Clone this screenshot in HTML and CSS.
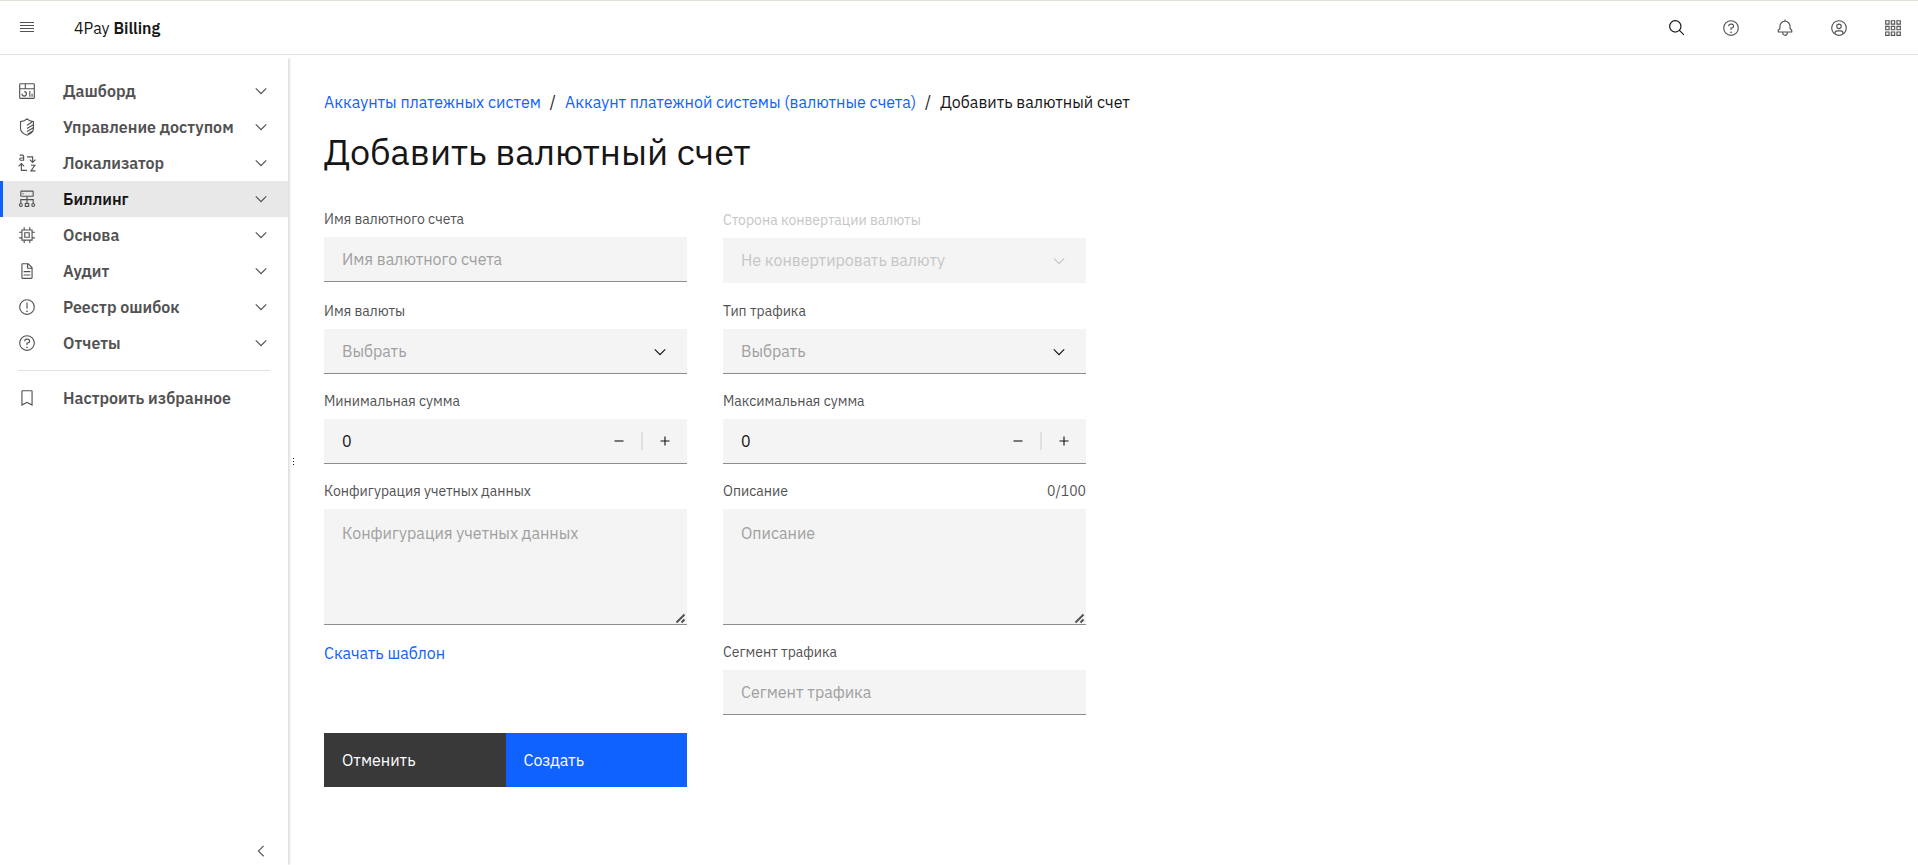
FILE: index.html
```html
<!DOCTYPE html>
<html lang="ru">
<head>
    <meta charset="UTF-8">
    <meta name="viewport" content="width=device-width, initial-scale=1.0">
    <title>4Pay Billing</title>
    <link rel="stylesheet" href="styles.css">
</head>
<body>
    <header class="header">
        <button type="button" class="menu-btn" aria-label="Меню">
            <svg class="icon" viewBox="0 0 18 18"><path d="M2 4h14v1H2zM2 7h14v1H2zM2 10h14v1H2zM2 13h14v1H2z" /></svg>
        </button>
        <a href="#" class="brand">4Pay <b>Billing</b></a>
        <div class="header-actions">
            <button type="button" class="header-btn search" aria-label="Поиск">
                <svg class="icon" viewBox="0 0 32 32"><path d="M29,27.5859l-7.5521-7.5521a11.0177,11.0177,0,1,0-1.4141,1.4141L27.5859,29ZM4,13a9,9,0,1,1,9,9A9.01,9.01,0,0,1,4,13Z" /></svg>
            </button>
            <button type="button" class="header-btn" aria-label="Помощь">
                <svg class="icon" viewBox="0 0 32 32"><circle class="line" cx="16" cy="16" r="13" /><path d="M17,8H15.5A4.49,4.49,0,0,0,11,12.5V13h2v-.5A2.5,2.5,0,0,1,15.5,10H17a2.5,2.5,0,0,1,0,5H15v4.5h2V17a4.5,4.5,0,0,0,0-9Z" /><circle cx="16" cy="23.5" r="1.5" /></svg>
            </button>
            <button type="button" class="header-btn" aria-label="Уведомления">
                <svg class="icon" viewBox="0 0 32 32"><path d="M28.7071,19.293,26,16.5859V13a10.0136,10.0136,0,0,0-9-9.9492V1H15V3.0508A10.0136,10.0136,0,0,0,6,13v3.5859L3.2929,19.293A1,1,0,0,0,3,20v3a1,1,0,0,0,1,1h7v.7768a5.152,5.152,0,0,0,4.5,5.1987A5.0057,5.0057,0,0,0,21,25V24h7a1,1,0,0,0,1-1V20A1,1,0,0,0,28.7071,19.293ZM19,25a3,3,0,0,1-6,0V24h6Zm8-3H5V20.4141L7.707,17.707A1,1,0,0,0,8,17V13a8,8,0,0,1,16,0v4a1,1,0,0,0,.293.707L27,20.4141Z" /></svg>
            </button>
            <button type="button" class="header-btn" aria-label="Профиль">
                <svg class="icon" viewBox="0 0 32 32"><path d="M16,8a5,5,0,1,0,5,5A5,5,0,0,0,16,8Zm0,8a3,3,0,1,1,3-3A3.0034,3.0034,0,0,1,16,16Z" /><path d="M16,2A14,14,0,1,0,30,16,14.0158,14.0158,0,0,0,16,2ZM10,26.3765V25a3.0033,3.0033,0,0,1,3-3h6a3.0033,3.0033,0,0,1,3,3v1.3765a11.8989,11.8989,0,0,1-12,0Zm13.9925-1.4507A5.0016,5.0016,0,0,0,19,20H13a5.0016,5.0016,0,0,0-4.9925,4.9258,12,12,0,1,1,15.985,0Z" /></svg>
            </button>
            <button type="button" class="header-btn" aria-label="Приложения">
                <svg class="icon" viewBox="0 0 32 32"><path class="line" d="M3 3h6v6H3zM13 3h6v6h-6zM23 3h6v6h-6zM3 13h6v6H3zM13 13h6v6h-6zM23 13h6v6h-6zM3 23h6v6H3zM13 23h6v6h-6zM23 23h6v6h-6z" /></svg>
            </button>
        </div>
    </header>

    <div class="layout">
        <aside class="sidebar">
            <nav class="nav">
                <button type="button" class="nav-item">
                    <svg class="icon" viewBox="0 0 32 32"><path d="M24 21h2v5h-2zM20 16h2v10h-2z" /><path d="M11,26a5.0059,5.0059,0,0,1-5-5H8a3,3,0,1,0,3-3V16a5,5,0,0,1,0,10Z" /><path d="M28,2H4A2.002,2.002,0,0,0,2,4V28a2.0023,2.0023,0,0,0,2,2H28a2.0027,2.0027,0,0,0,2-2V4A2.0023,2.0023,0,0,0,28,2Zm0,9H14V4H28ZM12,4v7H4V4ZM4,28V13H28.0007l.0013,15Z" /></svg>
                    <span>Дашборд</span>
                    <svg class="icon" viewBox="0 0 32 32"><path d="M16 22 6 12l1.4-1.4 8.6 8.6 8.6-8.6L26 12z" /></svg>
                </button>
                <button type="button" class="nav-item">
                    <svg class="icon" viewBox="0 0 32 32"><path class="line" d="M16 1.5C13 4.500 9 6 4.500 6.500V18c0 6 5 10 11.500 12.500C22.500 28 27.500 24 27.500 18V6.500C23 6 19 4.500 16 1.500zM16 13l9-6M16 18.500l11-6.500M16 24l11-6.500M17 29l9-6" /></svg>
                    <span>Управление доступом</span>
                    <svg class="icon" viewBox="0 0 32 32"><path d="M16 22 6 12l1.4-1.4 8.6 8.6 8.6-8.6L26 12z" /></svg>
                </button>
                <button type="button" class="nav-item">
                    <svg class="icon" viewBox="0 0 32 32"><path class="line" d="M16 5h10v9M21 10l5 5 5-5M16 29H6V18M1 22l5-5 5 5" /><path class="line" d="M3 2h5q2 0 2 2v7H5q-2 0-2-2t2-2h5M23 20h7l-7 10h8" /></svg>
                    <span>Локализатор</span>
                    <svg class="icon" viewBox="0 0 32 32"><path d="M16 22 6 12l1.4-1.4 8.6 8.6 8.6-8.6L26 12z" /></svg>
                </button>
                <button type="button" class="nav-item active">
                    <svg class="icon" viewBox="0 0 32 32"><rect class="line" x="5" y="2" width="22" height="9" rx="1" /><circle cx="9" cy="6.5" r="1" /><path class="line" d="M16 11v12M5 24v-7h22v7M13 24h6v5h-6z" /><circle class="line" cx="5" cy="26.5" r="2.5" /><circle class="line" cx="27" cy="26.5" r="2.5" /></svg>
                    <span>Биллинг</span>
                    <svg class="icon" viewBox="0 0 32 32"><path d="M16 22 6 12l1.4-1.4 8.6 8.6 8.6-8.6L26 12z" /></svg>
                </button>
                <button type="button" class="nav-item">
                    <svg class="icon" viewBox="0 0 32 32"><path class="line" d="M7 7h18v18H7zM12 12h8v8h-8zM11 7V2M21 7V2M11 30v-5M21 30v-5M7 11H2M7 21H2M30 11h-5M30 21h-5" /></svg>
                    <span>Основа</span>
                    <svg class="icon" viewBox="0 0 32 32"><path d="M16 22 6 12l1.4-1.4 8.6 8.6 8.6-8.6L26 12z" /></svg>
                </button>
                <button type="button" class="nav-item">
                    <svg class="icon" viewBox="0 0 32 32"><path d="M25.7,9.3l-7-7C18.5,2.1,18.3,2,18,2H8C6.9,2,6,2.9,6,4v24c0,1.1,0.9,2,2,2h16c1.1,0,2-0.9,2-2V10C26,9.7,25.9,9.5,25.7,9.3zM18,4.4l5.6,5.6H18V4.4zM24,28H8V4h8v6c0,1.1,0.9,2,2,2h6V28z" /><path d="M10 22h12v2H10zM10 16h12v2H10z" /></svg>
                    <span>Аудит</span>
                    <svg class="icon" viewBox="0 0 32 32"><path d="M16 22 6 12l1.4-1.4 8.6 8.6 8.6-8.6L26 12z" /></svg>
                </button>
                <button type="button" class="nav-item">
                    <svg class="icon" viewBox="0 0 32 32"><circle class="line" cx="16" cy="16" r="13" /><path d="M15 8h2v11h-2z" /><circle cx="16" cy="23.5" r="1.5" /></svg>
                    <span>Реестр ошибок</span>
                    <svg class="icon" viewBox="0 0 32 32"><path d="M16 22 6 12l1.4-1.4 8.6 8.6 8.6-8.6L26 12z" /></svg>
                </button>
                <button type="button" class="nav-item">
                    <svg class="icon" viewBox="0 0 32 32"><circle class="line" cx="16" cy="16" r="13" /><path d="M17,8H15.5A4.49,4.49,0,0,0,11,12.5V13h2v-.5A2.5,2.5,0,0,1,15.5,10H17a2.5,2.5,0,0,1,0,5H15v4.5h2V17a4.5,4.5,0,0,0,0-9Z" /><circle cx="16" cy="23.5" r="1.5" /></svg>
                    <span>Отчеты</span>
                    <svg class="icon" viewBox="0 0 32 32"><path d="M16 22 6 12l1.4-1.4 8.6 8.6 8.6-8.6L26 12z" /></svg>
                </button>
                <hr class="nav-divider">
                <button type="button" class="nav-item">
                    <svg class="icon" viewBox="0 0 32 32"><path d="M24,4V26.75l-7.1-3.59-.9-.45-.9.45L8,26.75V4H24m0-2H8A2,2,0,0,0,6,4V30l10-5.05L26,30V4a2,2,0,0,0-2-2Z" /></svg>
                    <span>Настроить избранное</span>
                </button>
            </nav>
            <button type="button" class="collapse-btn" aria-label="Свернуть">
                <svg class="icon" viewBox="0 0 32 32"><path d="M10 16 20 6l1.4 1.4-8.6 8.6 8.6 8.6L20 26z" /></svg>
            </button>
            <div class="resizer"><i></i><i></i><i></i></div>
        </aside>

        <main class="content">
            <nav class="breadcrumb">
                <a href="#">Аккаунты платежных систем</a>
                <span>/</span>
                <a href="#">Аккаунт платежной системы (валютные счета)</a>
                <span>/</span>
                <span>Добавить валютный счет</span>
            </nav>
            <h1 class="title">Добавить валютный счет</h1>

            <form class="form">
                <div class="field">
                    <label for="account-name">Имя валютного счета</label>
                    <input type="text" id="account-name" class="control" placeholder="Имя валютного счета">
                </div>
                <div class="field disabled">
                    <label for="side">Сторона конвертации валюты</label>
                    <div class="select">
                        <select id="side" class="control" disabled>
                            <option>Не конвертировать валюту</option>
                        </select>
                        <svg class="icon" viewBox="0 0 16 16"><path d="M8 11 3 6l.7-.7L8 9.6l4.300-4.300.7.7z" /></svg>
                    </div>
                </div>
                <div class="field">
                    <label for="currency">Имя валюты</label>
                    <div class="select">
                        <select id="currency" class="control">
                            <option>Выбрать</option>
                        </select>
                        <svg class="icon" viewBox="0 0 16 16"><path d="M8 11 3 6l.7-.7L8 9.6l4.3-4.3.7.7z" /></svg>
                    </div>
                </div>
                <div class="field">
                    <label for="traffic-type">Тип трафика</label>
                    <div class="select">
                        <select id="traffic-type" class="control">
                            <option>Выбрать</option>
                        </select>
                        <svg class="icon" viewBox="0 0 16 16"><path d="M8 11 3 6l.7-.7L8 9.6l4.3-4.3.7.7z" /></svg>
                    </div>
                </div>
                <div class="field">
                    <label for="min-sum">Минимальная сумма</label>
                    <div class="number">
                        <input type="number" id="min-sum" value="0">
                        <button type="button" aria-label="Уменьшить"><svg class="icon" viewBox="0 0 32 32"><path d="M8 15h16v2H8z" /></svg></button>
                        <span class="rule"></span>
                        <button type="button" aria-label="Увеличить"><svg class="icon" viewBox="0 0 32 32"><path d="M17 15V8h-2v7H8v2h7v7h2v-7h7v-2z" /></svg></button>
                    </div>
                </div>
                <div class="field">
                    <label for="max-sum">Максимальная сумма</label>
                    <div class="number">
                        <input type="number" id="max-sum" value="0">
                        <button type="button" aria-label="Уменьшить"><svg class="icon" viewBox="0 0 32 32"><path d="M8 15h16v2H8z" /></svg></button>
                        <span class="rule"></span>
                        <button type="button" aria-label="Увеличить"><svg class="icon" viewBox="0 0 32 32"><path d="M17 15V8h-2v7H8v2h7v7h2v-7h7v-2z" /></svg></button>
                    </div>
                </div>
                <div class="field">
                    <label for="config">Конфигурация учетных данных</label>
                    <textarea id="config" class="control" placeholder="Конфигурация учетных данных"></textarea>
                </div>
                <div class="field">
                    <div class="label-row">
                        <label for="description">Описание</label>
                        <span>0/100</span>
                    </div>
                    <textarea id="description" class="control" maxlength="100" placeholder="Описание"></textarea>
                </div>
                <div>
                    <a href="#" class="link">Скачать шаблон</a>
                </div>
                <div class="field">
                    <label for="segment">Сегмент трафика</label>
                    <input type="text" id="segment" class="control" placeholder="Сегмент трафика">
                </div>
                <div class="buttons">
                    <button type="button" class="btn secondary">Отменить</button>
                    <button type="submit" class="btn primary">Создать</button>
                </div>
            </form>
        </main>
    </div>
</body>
</html>
```

FILE: styles.css
```css
* {
    box-sizing: border-box;
}
body {
    margin: 0;
    min-height: 100vh;
    display: flex;
    flex-direction: column;
    font-family: "IBM Plex Sans", "Noto Sans", sans-serif;
    font-size: 16px;
    line-height: 20px;
    color: #161616;
    background-color: #fff;
}
button, input, select, textarea {
    font: inherit;
    color: inherit;
    border: 0;
    border-radius: 0;
    margin: 0;
    padding: 0;
    background: none;
}
button {
    cursor: pointer;
}
a {
    color: #0f62fe;
    text-decoration: none;
}
.icon {
    display: block;
    width: 18px;
    height: 18px;
    flex: none;
    fill: currentColor;
}
.line {
    fill: none;
    stroke: currentColor;
    stroke-width: 2;
}

/* header */
.header {
    display: flex;
    align-items: center;
    height: 55px;
    border-top: 1px solid #dde1d6;
    border-bottom: 1px solid #e0e0e0;
}
.menu-btn {
    width: 54px;
    height: 52px;
    padding: 0 18px 2px;
    color: #525252;
}
.brand {
    margin-left: 20px;
    color: #161616;
}
.brand b {
    font-weight: 600;
}
.header-actions {
    display: flex;
    gap: 4px;
    margin-left: auto;
}
.header-btn {
    width: 50px;
    height: 53px;
    display: flex;
    align-items: center;
    justify-content: center;
    color: #525252;
}
.header-btn.search {
    color: #161616;
}

/* sidebar */
.layout {
    flex: 1;
    display: flex;
}
.sidebar {
    position: relative;
    width: 288px;
    flex: none;
    display: flex;
    flex-direction: column;
    justify-content: space-between;
    margin-top: 3px;
    padding: 15px 0 5px;
    box-shadow: 1px 0 3px rgba(0, 0, 0, 0.2);
    clip-path: inset(0 -12px 0 0);
}
.nav-item {
    width: 100%;
    height: 36px;
    padding: 0 18px 0 15px;
    display: flex;
    align-items: center;
    border-left: 3px solid transparent;
    font-weight: 600;
    text-align: left;
    color: #525252;
}
.nav-item span {
    flex: 1;
    margin-left: 27px;
    white-space: nowrap;
}
.nav-item.active {
    background-color: #e8e8e8;
    border-color: #0f62fe;
}
.nav-item.active span {
    color: #161616;
}
.nav-divider {
    margin: 9px 18px;
    border: 0;
    border-top: 1px solid #e0e0e0;
}
.collapse-btn {
    align-self: flex-end;
    margin-right: 18px;
    color: #525252;
}
.resizer {
    position: absolute;
    left: 100%;
    top: 0;
    bottom: 0;
    width: 10px;
    display: flex;
    flex-direction: column;
    align-items: center;
    justify-content: center;
    gap: 2px;
    cursor: col-resize;
}
.resizer i {
    width: 1px;
    height: 1px;
    background-color: #161616;
}

/* content */
.content {
    flex: 1;
    padding: 36px 34px 36px 36px;
}
.breadcrumb {
    display: flex;
    gap: 9px;
    line-height: 22px;
}
.title {
    margin: 18px 0 38px;
    font-size: 36px;
    font-weight: 400;
    line-height: 41px;
}
.form {
    display: grid;
    grid-template-columns: repeat(4, 1fr);
    gap: 18px 36px;
}
.form > :nth-child(odd) {
    grid-column: 1;
}
.field label,
.label-row {
    display: block;
    margin-bottom: 9px;
    font-size: 14px;
    line-height: 18px;
    color: #525252;
}
.label-row {
    display: flex;
    justify-content: space-between;
}
.field .label-row label {
    margin: 0;
}
.control {
    display: block;
    width: 100%;
    height: 45px;
    padding: 0 18px;
    background-color: #f4f4f4;
    border-bottom: 1px solid #8d8d8d;
}
.control::placeholder {
    color: #a0a0a0;
    opacity: 1;
}
textarea.control {
    height: 116px;
    padding: 14px 18px;
    resize: vertical;
}
textarea::-webkit-resizer {
    background: url("data:image/svg+xml,%3Csvg xmlns='http://www.w3.org/2000/svg' width='15' height='15'%3E%3Cpath d='M4.500 13.500l8-8M9.500 13.500l3-3' stroke='%23525252' stroke-width='2'/%3E%3C/svg%3E") no-repeat right bottom;
}
.select {
    position: relative;
}
.select select {
    appearance: none;
    color: #a0a0a0;
}
.select .icon {
    position: absolute;
    right: 18px;
    top: 14px;
    pointer-events: none;
}
.field.disabled {
    padding: 1px 0;
}
.disabled label,
.disabled .icon,
.disabled select {
    color: #c6c6c6;
    opacity: 1;
}
.disabled select {
    border-color: transparent;
}
.number {
    display: flex;
    align-items: center;
    height: 45px;
    background-color: #f4f4f4;
    border-bottom: 1px solid #8d8d8d;
}
.number input {
    flex: 1;
    min-width: 0;
    padding-left: 18px;
    appearance: textfield;
}
.number input::-webkit-inner-spin-button {
    appearance: none;
}
.number button {
    width: 44px;
    height: 44px;
    display: flex;
    align-items: center;
    justify-content: center;
}
.number .rule {
    width: 2px;
    height: 18px;
    background-color: #e0e0e0;
}
.buttons {
    display: flex;
}
.btn {
    flex: 1;
    height: 54px;
    padding: 0 18px;
    font-weight: 400;
    text-align: left;
    color: #fff;
}
.secondary {
    background-color: #393939;
}
.primary {
    background-color: #0f62fe;
}
```
